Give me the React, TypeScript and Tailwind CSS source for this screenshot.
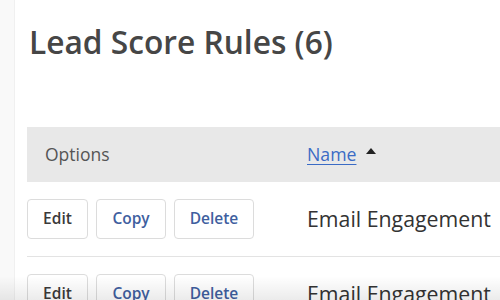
import React from "react";

function Btn({ label, dark, w }: { label: string; dark?: boolean; w: string }) {
  return (
    <div
      className={`${w} h-[40px] flex items-center justify-center rounded-[4px] border border-[#dcdcdc] bg-white text-[15.5px] font-semibold ${dark ? "text-[#3a3a3a]" : "text-[#3f5f9f]"}`}
    >
      {label}
    </div>
  );
}

function Row() {
  return (
    <div className="flex items-center h-[75px] border-b border-[#e3e3e3]">
      <div className="w-[280px] flex gap-[8px]">
        <Btn label="Edit" dark w="w-[61px]" />
        <Btn label="Copy" w="w-[70px]" />
        <Btn label="Delete" w="w-[80px]" />
      </div>
      <div className="text-[21.3px] text-[#333]">Email Engagement</div>
    </div>
  );
}

export default function App() {
  return (
    <div
      className="relative w-[500px] h-[300px] overflow-hidden bg-white flex"
      style={{ fontFamily: '"Open Sans", sans-serif' }}
    >
      <div className="w-[15px] shrink-0 bg-[#f9f9f9] border-r border-[#f0f0f0]" />
      <div className="flex-1 pl-[12px] pt-[22px]">
        <h1 className="text-[31.7px] font-semibold text-[#464646] leading-[40px] ml-[2px]">
          Lead Score Rules (6)
        </h1>
        <div className="mt-[65px]">
          <div className="flex items-center h-[55px] bg-[#e8e8e8]">
            <div className="w-[280px] pl-[18px] text-[17.5px] text-[#555]">Options</div>
            <div className="flex items-center gap-[10px]">
              <span className="text-[17.7px] text-[#3a6bc5] underline underline-offset-[3px]">Name</span>
              <svg width="10" height="7" viewBox="0 0 10 7" className="-mt-[8px]">
                <path d="M0 7 L5 1 L10 7 Z" fill="#222" />
              </svg>
            </div>
          </div>
          <Row />
          <Row />
        </div>
      </div>
      <div className="absolute left-0 right-0 bottom-0 h-[24px] bg-gradient-to-b from-transparent to-[#00000014] pointer-events-none" />
    </div>
  );
}
